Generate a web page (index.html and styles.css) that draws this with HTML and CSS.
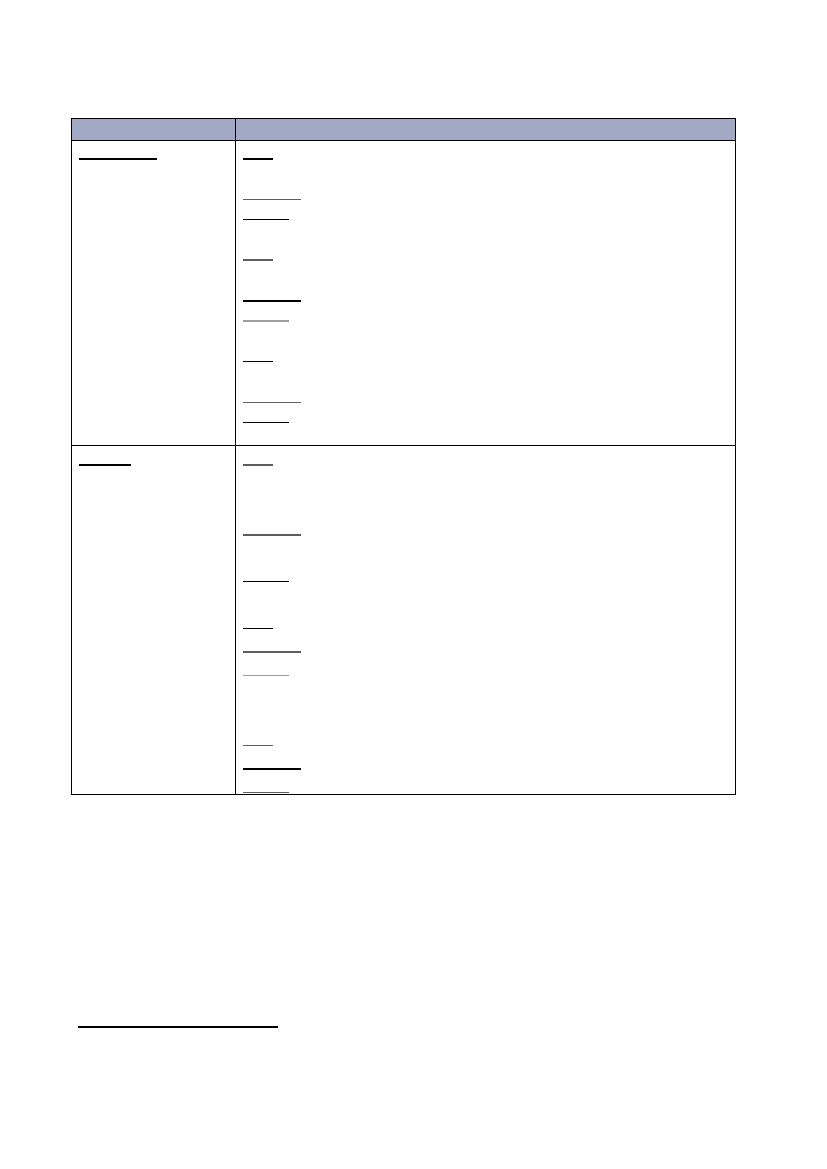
FILE: index.html
```html
<!DOCTYPE html>
<html>
<head>
<meta charset="utf-8">
<link rel="stylesheet" href="styles.css">
</head>
<body>
<div class="page">
  <div class="table">
    <div class="row head">
      <div class="cell"></div>
      <div class="cell div"></div>
    </div>
    <div class="row r1">
      <div class="cell first"><div class="line k w78"></div></div>
      <div class="cell div first">
        <div class="line k w30"></div>
        <div class="line g s2 w58"></div>
        <div class="line k s1 w46"></div>
        <div class="line g s2 w30"></div>
        <div class="line k s2 w58"></div>
        <div class="line l s1 w46"></div>
        <div class="line k s2 w30"></div>
        <div class="line g s2 w58"></div>
        <div class="line k s1 w46"></div>
      </div>
    </div>
    <div class="row r2">
      <div class="cell first"><div class="line k w52"></div></div>
      <div class="cell div first">
        <div class="line g w30"></div>
        <div class="line g s3 w58"></div>
        <div class="line k s2 w46"></div>
        <div class="line k s2 w30"></div>
        <div class="line g s1 w58"></div>
        <div class="line l s1 w46"></div>
        <div class="line g s3 w30"></div>
        <div class="line k s1 w58"></div>
        <div class="line g s1 w46"></div>
      </div>
    </div>
  </div>
  <div class="footnote"></div>
</div>
</body>
</html>
```
FILE: styles.css
```css
html, body {
  margin: 0;
  padding: 0;
  background: #ffffff;
  font-family: "Liberation Sans", Arial, sans-serif;
}
.page {
  padding: 118px 0 0 71px;
}
.table {
  box-sizing: border-box;
  width: 665px;
  border: 1px solid #000;
}
.row {
  display: grid;
  grid-template-columns: 163px 1fr;
}
.head {
  height: 21px;
  background: #a1a9c5;
  border-bottom: 1px solid #000;
}
.r1 {
  --u: 20.3px;
  height: 304px;
  border-bottom: 1px solid #000;
}
.r2 {
  --u: 23.4px;
  height: 348px;
}
.cell {
  box-sizing: border-box;
  padding-left: 7px;
}
.div {
  border-left: 1px solid #000;
}
.r1 .first { padding-top: 17px; }
.r2 .first { padding-top: 18px; }
.line {
  height: 1.5px;
}
.s1 { margin-top: calc(var(--u) * 1 - 1.5px); }
.s2 { margin-top: calc(var(--u) * 2 - 1.5px); }
.s3 { margin-top: calc(var(--u) * 3 - 1.5px); }
.k { background: #000; }
.g { background: #5e5e5e; }
.l { background: #9e9e9e; }
.w30 { width: 30px; }
.w46 { width: 46px; }
.w52 { width: 52px; }
.w58 { width: 58px; }
.w78 { width: 78px; }
.footnote {
  margin: 231px 0 0 7px;
  width: 200px;
  height: 1.5px;
  background: #000;
}
```
